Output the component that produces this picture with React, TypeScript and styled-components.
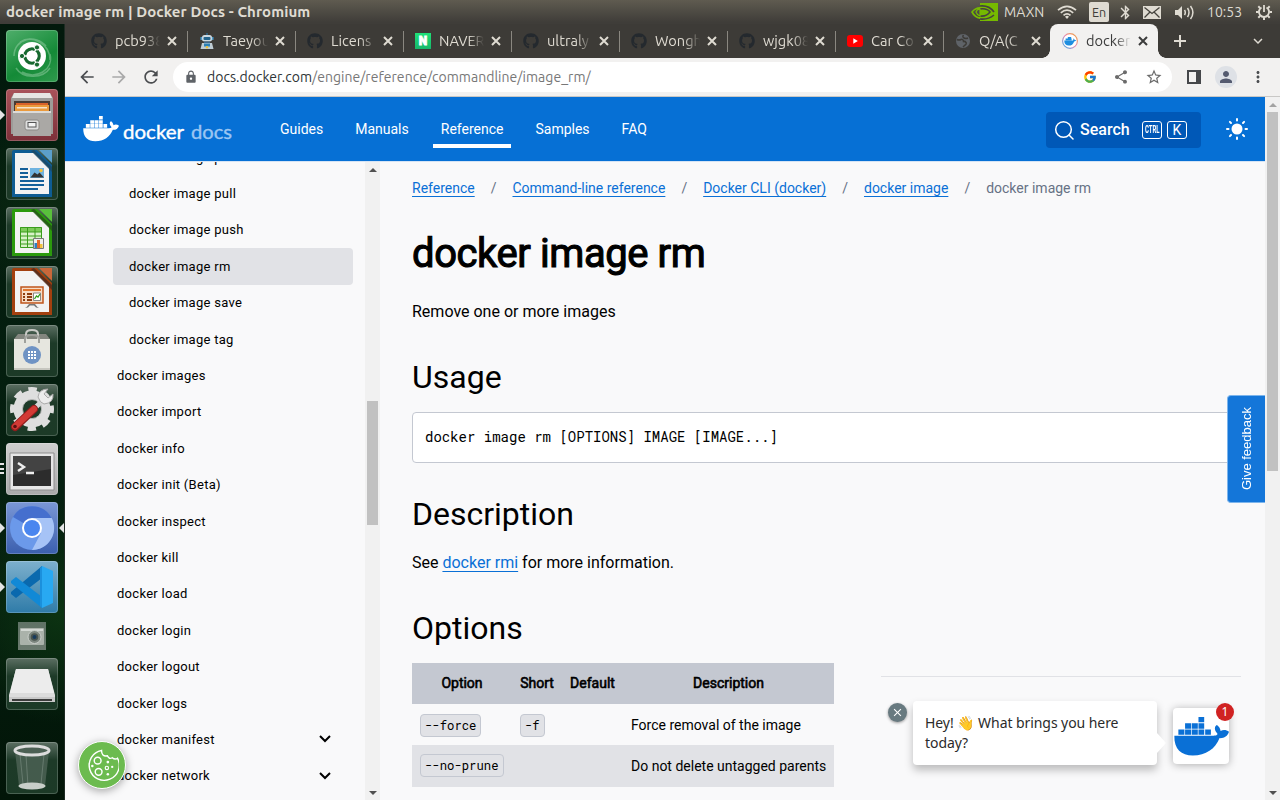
import React from "react";
import styled, { createGlobalStyle, css } from "styled-components";
import { FaGithub } from "react-icons/fa";
import { FcGoogle } from "react-icons/fc";
import {
  MdArrowBack,
  MdArrowForward,
  MdRefresh,
  MdLock,
  MdShare,
  MdStarBorder,
  MdMoreVert,
  MdPerson,
  MdClose,
  MdExpandMore,
  MdBluetooth,
} from "react-icons/md";

const ui = `Ubuntu, "Noto Sans", "Open Sans", sans-serif`;
const roboto = `Roboto, "Liberation Sans", sans-serif`;
const mono = `"Roboto Mono", "Liberation Mono", monospace`;

const Global = createGlobalStyle`
  *, *::before, *::after { box-sizing: border-box; }
  body { margin: 0; font-family: ${roboto}; color: #000; background: #f9f9fa; overflow: hidden; }
  svg { display: block; flex: none; }
`;

const Desktop = styled.div`
  width: 1280px;
  height: 800px;
  display: grid;
  grid-template: 24px 1fr / 65px minmax(0, 1fr);
  overflow: hidden;
  position: relative;
`;

/* ---------- system panel ---------- */
const Panel = styled.header`
  grid-column: 1 / -1;
  display: flex;
  align-items: center;
  justify-content: space-between;
  padding: 0 8px 0 6px;
  background: linear-gradient(#5f5b50, #3f3d39 92%);
  color: #dfdbd2;
  font-family: ${ui};
`;
const WindowTitle = styled.div`
  font-size: 15px;
  font-weight: 700;
  letter-spacing: 0.08px;
  line-height: 24px;
  white-space: nowrap;
`;
const Tray = styled.div`
  display: flex;
  align-items: center;
  font-size: 14px;
  height: 24px;
`;
const TrayItem = styled.div<{ $w: number }>`
  width: ${(p) => p.$w}px;
  flex: none;
  white-space: nowrap;
`;
const Lang = styled.div`
  width: 20px;
  height: 20px;
  margin-right: 8px;
  border-radius: 2px;
  background: #dfdbd2;
  color: #3f3d39;
  font-size: 12.5px;
  line-height: 20px;
  text-align: center;
`;

/* ---------- launcher ---------- */
const Launcher = styled.nav`
  display: flex;
  flex-direction: column;
  gap: 7px;
  padding: 6px 0 0 6px;
  background:
    radial-gradient(circle at 50px 180px, #0b2a12 0, transparent 90px),
    radial-gradient(circle at 60px 590px, #0c3312 0, transparent 110px),
    linear-gradient(#02190c, #052010 60%, #021508);
  border-right: 1px solid #1d2a22;
`;
const tileTones = {
  green: "linear-gradient(150deg, #4fae6b, #148a37 60%, #2f9a4d)",
  red: "linear-gradient(#a8525a, #7d3039)",
  glass: "linear-gradient(#5c6f63, #1d3a28 35%, #1c3a27)",
  silver: "linear-gradient(#cfcfcf, #a9a9a9)",
  blue: "linear-gradient(#7a97d6, #3b5fae)",
  sky: "linear-gradient(#7db0cd, #2f7ba8)",
};
const Tile = styled.div<{ $tone: keyof typeof tileTones; $push?: number }>`
  position: relative;
  width: 52px;
  height: 52px;
  flex: none;
  border-radius: 4px;
  margin-top: ${(p) => p.$push || 0}px;
  background: ${(p) => tileTones[p.$tone]};
  box-shadow: inset 0 0 0 1px rgba(255, 255, 255, 0.2);
`;
const Camera = styled.div`
  width: 28px;
  height: 28px;
  margin: 2px 0 1px 12px;
  background: linear-gradient(#5f7265, #6b7a6f);
`;
const Pip = styled.i<{ $side: "left" | "right" }>`
  position: absolute;
  top: 21px;
  border: 5px solid transparent;
  ${(p) =>
    p.$side === "left"
      ? css`left: -6px; border-left-color: #e4e4e4; border-right-width: 0;`
      : css`right: -6px; border-right-color: #e4e4e4; border-left-width: 0;`}
`;
const Marks = styled.i`
  position: absolute;
  left: -6px;
  top: 20px;
  width: 4px;
  height: 12px;
  background: repeating-linear-gradient(#e4e4e4 0 2px, transparent 2px 4.6px);
`;

/* ---------- browser chrome ---------- */
const Browser = styled.div`
  display: grid;
  grid-template-columns: minmax(0, 1fr);
  grid-template-rows: 34px 39px 1fr;
  min-width: 0;
  min-height: 0;
`;
const TabStrip = styled.div`
  display: flex;
  background: #3d3b37;
  padding-left: 14px;
  font-family: ${ui};
`;
const Tab = styled.div<{ $active?: boolean; $bar?: boolean }>`
  position: relative;
  width: 108px;
  height: 34px;
  flex: none;
  display: flex;
  align-items: center;
  padding-left: 12px;
  color: #dfdbd2;
  &::after {
    content: "";
    display: ${(p) => (p.$bar ? "block" : "none")};
    position: absolute;
    right: -1px;
    top: 7px;
    width: 1px;
    height: 21px;
    background: #8a8780;
  }
  ${(p) =>
    p.$active &&
    css`
      background: #f2f1f0;
      color: #3c3c3c;
      border-radius: 8px 8px 0 0;
      margin-left: -1px;
    `}
`;
const Flare = styled.i<{ $side: "left" | "right" }>`
  position: absolute;
  bottom: 0;
  width: 8px;
  height: 8px;
  ${(p) => p.$side}: -8px;
  background: radial-gradient(circle at ${(p) => (p.$side === "left" ? "0 0" : "100% 0")}, transparent 7.5px, #f2f1f0 8px);
`;
const TabLabel = styled.span`
  width: 46px;
  margin-left: 8px;
  font-size: 14.6px;
  line-height: 20px;
  white-space: nowrap;
  overflow: hidden;
  mask-image: linear-gradient(90deg, #000 64%, transparent 98%);
`;
const CloseMark = styled.svg`
  margin-left: 6px;
  width: 10px;
  height: 10px;
  fill: none;
  stroke: currentColor;
  stroke-width: 2px;
`;
const NewTab = styled.svg`
  margin: 11px 0 0 16px;
  width: 12px;
  height: 12px;
  stroke: #dfdbd2;
  stroke-width: 2px;
`;
const TabMenu = styled(MdExpandMore)`
  margin: 8px 13px 0 auto;
  width: 18px;
  height: 18px;
  color: #dfdbd2;
`;
const Naver = styled.span`
  width: 16px;
  height: 16px;
  background: linear-gradient(#1fe077, #16b76a);
  color: #fff;
  font: 900 12px/16px ${roboto};
  -webkit-text-stroke: 0.8px #fff;
  text-align: center;
`;
const Toolbar = styled.div`
  display: flex;
  align-items: center;
  background: #f2f1f0;
  border-bottom: 1px solid #c9c8c6;
  padding: 0 12px 0 12px;
  color: #4b4d50;
`;
const NavButton = styled.span<{ $off?: boolean }>`
  width: 32px;
  flex: none;
  color: ${(p) => (p.$off ? "#a9a9a9" : "#4b4d50")};
`;
const Omnibox = styled.div`
  width: 999px;
  height: 30px;
  flex: none;
  display: flex;
  align-items: center;
  border-radius: 15px;
  background: #fff;
  padding: 0 9px 0 11px;
  font-family: ${ui};
  font-size: 14px;
  color: #777;
`;
const Url = styled.div`
  flex: 1;
  margin-left: 9px;
  white-space: nowrap;
  letter-spacing: 0.03px;
  b { font-weight: 400; color: #2e3436; }
`;
const OmniIcons = styled.div`
  display: flex;
  align-items: center;
  gap: 16px;
  color: #6b6b6b;
`;
const PanelToggle = styled.svg`
  margin: 0 14px 0 15px;
`;
const Avatar = styled.div`
  width: 22px;
  height: 22px;
  border-radius: 50%;
  display: grid;
  place-items: center;
  background: #dee1e6;
  color: #555b70;
  margin-right: 12px;
`;

/* ---------- page ---------- */
const Viewport = styled.div`
  display: grid;
  grid-template-columns: minmax(0, 1fr) 15px;
  min-height: 0;
`;
const Page = styled.div`
  position: relative;
  display: grid;
  grid-template-columns: minmax(0, 1fr);
  grid-template-rows: 65px 1fr;
  background: #f9f9fa;
  min-width: 0;
  min-height: 0;
`;
const SiteHeader = styled.div`
  display: flex;
  align-items: center;
  background: #0670d5;
  border-bottom: 1px solid #d5e4f5;
  color: #fff;
  padding: 0 16px 0 18px;
`;
const TopNav = styled.div`
  display: flex;
  gap: 16px;
  margin-left: 38px;
  flex: 1;
`;
const TopLink = styled.a<{ $active?: boolean }>`
  padding: 5px 8px 0;
  font-size: 14px;
  line-height: 24px;
  height: 36px;
  margin-top: 2px;
  border-bottom: 4px solid ${(p) => (p.$active ? "#fff" : "transparent")};
`;
const SearchBox = styled.div`
  width: 155px;
  height: 36px;
  margin-top: 2px;
  border-radius: 4px;
  background: #0058b7;
  display: flex;
  align-items: center;
  padding-left: 8px;
  margin-right: 24px;
`;
const SearchText = styled.span`
  width: 62px;
  margin-left: 6px;
  margin-top: -1px;
  font-size: 16px;
  font-weight: 500;
`;
const Key = styled.span<{ $tight?: boolean }>`
  width: 20px;
  height: 18px;
  margin-right: 5px;
  border: 1px solid #fff;
  border-radius: 3px;
  display: flex;
  justify-content: center;
  font-size: ${(p) => (p.$tight ? "10px" : "14px")};
  font-weight: ${(p) => (p.$tight ? 700 : 400)};
  line-height: 16px;
  span {
    flex: none;
    transform: scaleX(${(p) => (p.$tight ? 0.6 : 1)});
  }
`;
const Body = styled.div`
  display: grid;
  grid-template-columns: 300px 15px minmax(0, 1fr);
  min-height: 0;
`;
const Sidebar = styled.aside`
  overflow: hidden;
  padding: 0 12px 0 48px;
`;
const SideList = styled.div`
  margin-top: -23px;
`;
const SideItem = styled.a<{ $nested?: boolean; $active?: boolean }>`
  display: flex;
  align-items: center;
  justify-content: space-between;
  height: 36.4px;
  padding: 0 22px 0 ${(p) => (p.$nested ? 16 : 4)}px;
  font-size: 13px;
  letter-spacing: 0.28px;
  border-radius: 4px;
  background: ${(p) => (p.$active ? "#e1e2e6" : "transparent")};
`;
const Track = styled.div<{ $top: number; $size: number }>`
  display: flex;
  flex-direction: column;
  justify-content: space-between;
  align-items: center;
  position: relative;
  background: #f1f1f1;
  padding: 6px 0 5px;
  &::after {
    content: "";
    position: absolute;
    left: 2px;
    top: ${(p) => p.$top}px;
    width: 11px;
    height: ${(p) => p.$size}px;
    background: #c1c1c1;
  }
`;
const Caret = styled.i<{ $up?: boolean; $dim?: boolean }>`
  border: 4px solid transparent;
  ${(p) => (p.$up ? "border-top-width: 0; border-bottom-color" : "border-bottom-width: 0; border-top-color")}: ${(p) =>
    p.$dim ? "#a3a3a3" : "#505050"};
`;
const Article = styled.main`
  padding: 14px 24px 0 32px;
  overflow: hidden;
`;
const Crumbs = styled.div`
  display: flex;
  gap: 16px;
  font-size: 14px;
  line-height: 24px;
  color: #677285;
  white-space: nowrap;
`;
const Link = styled.a`
  color: #0a70d6;
  text-decoration: underline;
  text-underline-offset: 3px;
  text-decoration-thickness: 1px;
`;
const H1 = styled.h1`
  margin: 30px 0 22px;
  font-size: 40px;
  line-height: 48px;
  font-weight: 400;
  letter-spacing: -0.42px;
  -webkit-text-stroke: 1.1px #000;
`;
const H2 = styled.h2<{ $top: number; $bottom: number }>`
  margin: ${(p) => p.$top}px 0 ${(p) => p.$bottom}px;
  font-size: 32px;
  line-height: 40px;
  font-weight: 400;
`;
const Para = styled.p`
  margin: 0;
  font-size: 16px;
  line-height: 24px;
`;
const CodeBlock = styled.pre`
  margin: 0;
  width: 821px;
  height: 51px;
  padding: 0 12px;
  border: 1px solid #c4c8d1;
  border-radius: 4px;
  background: #fff;
  font: 14px/47px ${mono};
`;
const OptionsRow = styled.div`
  display: flex;
  align-items: flex-start;
  justify-content: space-between;
`;
const Table = styled.table`
  width: 422px;
  border-collapse: collapse;
  table-layout: fixed;
  font-size: 14px;
`;
const Th = styled.th<{ $w: number }>`
  width: ${(p) => p.$w}px;
  height: 41px;
  padding: 0 0 2px;
  background: #c4c8d1;
  font-weight: 400;
  -webkit-text-stroke: 0.6px #000;
`;
const Tr = styled.tr<{ $shade?: boolean }>`
  height: ${(p) => (p.$shade ? 42 : 41)}px;
  background: ${(p) => (p.$shade ? "#e1e2e6" : "transparent")};
  td { padding: ${(p) => (p.$shade ? "0 0 1px 8px" : "1px 0 0 8px")}; white-space: nowrap; }
`;
const Chip = styled.code`
  display: inline-block;
  height: 23px;
  padding: 0 4px;
  border: 1px solid #c4c8d1;
  border-radius: 4px;
  background: #e1e2e6;
  font: 12.25px/21px ${mono};
`;
const Rule = styled.hr`
  width: 360px;
  margin: 13px 0 0;
  border: 0;
  border-top: 1px solid #e1e2e6;
`;

/* ---------- overlays ---------- */
const Feedback = styled.div`
  position: absolute;
  right: 0;
  top: 298px;
  width: 38px;
  height: 108px;
  border-radius: 4px 0 0 4px;
  background: #1476d9;
  border: 1px solid #7db5ec;
  border-right: 0;
  color: #fff;
  display: grid;
  place-items: center;
  span {
    writing-mode: vertical-rl;
    transform: rotate(180deg);
    font: 13px "Liberation Sans", Arial, sans-serif;
    white-space: nowrap;
  }
`;
const CookieButton = styled.div`
  position: absolute;
  left: 13px;
  top: 644px;
  width: 48px;
  height: 48px;
  border-radius: 50%;
  border: 1.5px solid #fff;
  background: #6cbb4f;
  box-shadow: 0 2px 8px rgba(0, 0, 0, 0.35);
  display: grid;
  place-items: center;
`;
const Chat = styled.div`
  position: absolute;
  right: 36px;
  bottom: 35px;
  display: flex;
  align-items: flex-start;
`;
const ChatClose = styled.div`
  width: 19px;
  height: 19px;
  margin: 2px 6px 0 0;
  border-radius: 50%;
  background: #687a80;
  color: #fff;
  display: grid;
  place-items: center;
  box-shadow: 0 1px 3px rgba(0, 0, 0, 0.4);
`;
const Bubble = styled.div`
  position: relative;
  width: 244px;
  height: 64px;
  padding: 12px;
  border-radius: 4px;
  background: #fff;
  box-shadow: 0 5px 8px rgba(0, 0, 0, 0.25);
  color: #2b2b2b;
  font: 14px/20px "Noto Sans", "Noto Color Emoji", sans-serif;
  letter-spacing: -0.07px;
  white-space: nowrap;
  &::after {
    content: "";
    position: absolute;
    left: 244px;
    top: 32px;
    border: 10px solid transparent;
    border-left: 9px solid #fff;
    border-right: 0;
  }
`;
const ChatLauncher = styled.div`
  position: relative;
  width: 56px;
  height: 56px;
  margin: 7px 0 0 16px;
  border-radius: 4px;
  background: #fff;
  color: #0a70d6;
  box-shadow: 0 1px 8px rgba(0, 0, 0, 0.3);
  padding: 9px 0 0 1px;
`;
const Badge = styled.span`
  position: absolute;
  right: -5px;
  top: -5px;
  width: 18px;
  height: 18px;
  border-radius: 50%;
  background: #d02222;
  color: #fff;
  font: 12px/18px "Noto Sans", sans-serif;
  text-align: center;
`;

const Whale = ({ w }: { w: number }) => (
  <svg width={w} height={(w * 116) / 164} viewBox="0 0 164 116" fill="currentColor">
    <path d="M73 0h17v16H73zM33 19h18v16H33zM53 19h18v16H53zM73 19h17v16H73zM13 37h18v16H13zM33 37h18v16H33zM53 37h18v16H53zM73 37h17v16H73zM93 37h17v16H93z" />
    <path d="M1 56H118C128 56 132 52 128 48C119 38 121 27 128 24C134 28 138 34 139 42C147 37 157 39 164 44C160 58 148 64 136 63C122 96 96 115 56 115C22 115 0 96 1 56Z" />
  </svg>
);

const TabClose = () => (
  <CloseMark viewBox="0 0 10 10">
    <path d="M1 1l8 8M9 1L1 9" />
  </CloseMark>
);

const DocPage = ({ edge, fill, corner, children }: { edge: string; fill: string; corner: string; children: React.ReactNode }) => (
  <svg width="52" height="52" viewBox="0 0 52 52">
    <path d="M8 2H31L46 17V49H6V4Q6 2 8 2Z" fill={edge} />
    <path d="M9 5H28L43 20V46H9Z" fill="#f3f3f3" />
    <path d="M28 2L46 19V24L25 3Z" fill={fill} opacity=".8" />
    <path d="M33 2H46V15Q45 14 33 2Z" fill={corner} />
    {children}
  </svg>
);

const Robot = () => (
  <svg width="16" height="16" viewBox="0 0 16 16">
    <path d="M7.500 0h1v3h-1z" fill="#2c80b5" />
    <rect x="3" y="2" width="10" height="6.500" rx="2.500" fill="#cdd8df" />
    <path d="M1.500 4H3v3H1.500zM13 4h1.500v3H13z" fill="#4d9ccc" />
    <rect x="4.500" y="4" width="7" height="3" rx="1" fill="#24648c" />
    <path d="M5 8.500h6v1.500H5z" fill="#40688a" />
    <path d="M3 10h10l1.500 6h-13z" fill="#bfccd4" />
    <path d="M5 10.500h6v3H5z" fill="#2c80b5" />
    <circle cx="8" cy="14.300" r="1.200" fill="#ecc13c" />
  </svg>
);

const YouTube = () => (
  <svg width="16" height="16" viewBox="0 0 16 16">
    <rect y="2" width="16" height="12" rx="3" fill="#f00" />
    <path d="M6.300 5.300v5.400L10.800 8z" fill="#fff" />
  </svg>
);

const Globe = () => (
  <svg width="16" height="16" viewBox="0 0 16 16">
    <circle cx="8" cy="8" r="7" fill="#5f6368" />
    <path d="M2 6.500Q4 7.500 6 6.500T8.500 8.500Q10 8 11 9.500T9.500 12.500L8 14M8.500 2Q7 4 9 5T13 5" fill="none" stroke="#3d3b37" strokeWidth="1.500" />
  </svg>
);

const DockerFavicon = () => (
  <svg width="16" height="16" viewBox="0 0 16 16">
    <defs>
      <linearGradient id="ring" x1="0" y1="1" x2="1" y2="0">
        <stop offset="0" stopColor="#2aa6e8" />
        <stop offset=".5" stopColor="#e88ab5" />
        <stop offset="1" stopColor="#f0a030" />
      </linearGradient>
    </defs>
    <circle cx="8" cy="8" r="7.400" fill="#fff" stroke="url(#ring)" strokeWidth="1.100" />
    <path d="M2.200 7.600H11q.6-.6.2-2 1.300.4 1.500 1.500H14.300q-.7 1.300-2.100 1.300-1.500 4.200-5.500 4.200-4.300 0-4.500-5zM3.600 5.600h6v1.600h-6zM5.800 4h3.400v1.400H5.800z" fill="#1d8ee0" />
  </svg>
);

const tabs: { icon: React.ReactNode; label: string }[] = [
  { icon: <FaGithub size={16} color="#24292e" />, label: "pcb938" },
  { icon: <Robot />, label: "Taeyou" },
  { icon: <FaGithub size={16} color="#24292e" />, label: "Licens" },
  { icon: <Naver>N</Naver>, label: "NAVER" },
  { icon: <FaGithub size={16} color="#24292e" />, label: "ultraly" },
  { icon: <FaGithub size={16} color="#24292e" />, label: "Wongh" },
  { icon: <FaGithub size={16} color="#24292e" />, label: "wjgk08" },
  { icon: <YouTube />, label: "Car Co" },
  { icon: <Globe />, label: "Q/A(C" },
];

const sideItems: { text: string; nested?: boolean; active?: boolean; open?: boolean }[] = [
  { text: "docker image prune", nested: true },
  { text: "docker image pull", nested: true },
  { text: "docker image push", nested: true },
  { text: "docker image rm", nested: true, active: true },
  { text: "docker image save", nested: true },
  { text: "docker image tag", nested: true },
  { text: "docker images" },
  { text: "docker import" },
  { text: "docker info" },
  { text: "docker init (Beta)" },
  { text: "docker inspect" },
  { text: "docker kill" },
  { text: "docker load" },
  { text: "docker login" },
  { text: "docker logout" },
  { text: "docker logs" },
  { text: "docker manifest", open: true },
  { text: "docker network", open: true },
];

const SystemPanel = () => (
  <Panel>
    <WindowTitle>docker image rm | Docker Docs - Chromium</WindowTitle>
    <Tray>
      <TrayItem $w={33}>
        <svg width="27" height="18" viewBox="0 0 27 18">
          <path d="M9 0h18v18H9z" fill="#76b900" />
          <path d="M9 4v2Q4 6 2 9q3 5 7 5v2Q3 15 0 9 4 4 9 4z" fill="#76b900" />
          <path d="M9 3q9-1 14 6M9 16q8 1 14-4M9 6q7-1 10 3-4 5-10 4" fill="none" stroke="#45433d" strokeWidth="1.600" />
          <path d="M9 6v7Q6 12 5 9q1-3 4-3zM10 8q3 0 4 2-2 2-4 1z" fill="none" stroke="#76b900" strokeWidth="1.200" />
        </svg>
      </TrayItem>
      <TrayItem $w={53}>MAXN</TrayItem>
      <TrayItem $w={32}>
        <svg width="20" height="14" viewBox="0 0 20 14" fill="none" stroke="#dfdbd2" strokeWidth="1.700">
          <path d="M1 5.200Q10-2.500 19 5.200M3.800 7.800Q10 2.500 16.200 7.800M6.500 10.300Q10 7.300 13.500 10.300" />
          <path d="M8 11.700Q10 10 12 11.700L10 14z" fill="#dfdbd2" stroke="none" />
        </svg>
      </TrayItem>
      <Lang>En</Lang>
      <TrayItem $w={26}>
        <MdBluetooth size={17} />
      </TrayItem>
      <TrayItem $w={32}>
        <svg width="18" height="13" viewBox="0 0 18 13">
          <path d="M0 0h18v13H0z" fill="#dfdbd2" />
          <path d="M1.500 1.500L9 7.500l7.500-6M1.500 11.500L7 6M16.500 11.500L11 6" fill="none" stroke="#45433d" strokeWidth="1.300" />
        </svg>
      </TrayItem>
      <TrayItem $w={32}>
        <svg width="20" height="15" viewBox="0 0 20 15" fill="none" stroke="#dfdbd2" strokeWidth="1.500">
          <path d="M0 5h3l4-4v13l-4-4H0z" fill="#dfdbd2" stroke="none" />
          <path d="M9.500 5q1.600 2.500 0 5M12.500 3q3 4.500 0 9M15.500 1q4.800 6.500 0 13" />
        </svg>
      </TrayItem>
      <TrayItem $w={49}>10:53</TrayItem>
      <svg width="16" height="16" viewBox="0 0 16 16" fill="none" stroke="#dfdbd2">
        <path d="M5.500 3.500A5.100 5.100 0 1 0 10.500 3.500" strokeWidth="1.900" />
        <path d="M8 1V8" strokeWidth="1.800" />
        <path d="M2.300 2.300l1.800 1.800M13.700 2.300l-1.800 1.800M0 8h2.500M13.500 8H16M2.300 13.700l1.800-1.800M13.700 13.700l-1.800-1.800M8 13.500V16" strokeWidth="2" />
      </svg>
    </Tray>
  </Panel>
);

const Dock = () => (
  <Launcher>
    <Tile $tone="green">
      <svg width="52" height="52" viewBox="0 0 52 52">
        <path d="M8 26C8 8 30 4 40 16M44 24C48 40 30 50 16 42M10 38C16 48 36 50 44 38M14 12C26 4 44 14 44 30" fill="none" stroke="#a3d8b1" strokeWidth="1.500" opacity=".45" />
        <circle cx="26" cy="26" r="14" fill="#fff" />
        <circle cx="26" cy="26" r="7.200" fill="none" stroke="#17692f" strokeWidth="3.200" />
        <path d="M26 26L14 26M26 26L32 15.600M26 26L32 36.400" stroke="#fff" strokeWidth="1.300" />
        <circle cx="26" cy="26" r="5.400" fill="#fff" />
        <g fill="#17692f" stroke="#fff"><circle cx="16" cy="26" r="2.600" /><circle cx="31" cy="17.400" r="2.600" /><circle cx="31" cy="34.600" r="2.600" /></g>
      </svg>
    </Tile>
    <Tile $tone="red">
      <Pip $side="left" />
      <svg width="52" height="52" viewBox="0 0 52 52">
        <path d="M8 4H44L47 9V45H5V9Z" fill="#9d9b98" />
        <path d="M8 4H44L46 9H6Z" fill="#e6e5e3" />
        <path d="M8 12H44V24H8Z" fill="#4a3a32" />
        <path d="M10 14H42V24H10Z" fill="#d9622b" />
        <path d="M9 16H43V24H9Z" fill="#eb9a3c" />
        <path d="M11 18H41V19.500H11Z" fill="#f6e3cb" />
        <path d="M7 22H45V47H7Z" fill="#aaa8a5" />
        <path d="M7 22H45V24H7Z" fill="#dcdbd9" />
        <rect x="19" y="31" width="14" height="10" rx="2" fill="#dedede" stroke="#8b8986" />
        <rect x="22" y="33.500" width="8" height="4.500" fill="#f4f4f4" stroke="#555" />
      </svg>
    </Tile>
    <Tile $tone="glass">
      <DocPage edge="#0e5c93" fill="#1d4863" corner="#5b9fcb">
        <path d="M14 21h8M14 25h8M14 29h8M14 33h24M14 37h24M14 41h18" stroke="#14609a" strokeWidth="1.800" />
        <path d="M24 20h14v10H24z" fill="#6fb3e0" />
        <path d="M24.500 29.500l4-5 3 2 2-2 4.500 5z" fill="#333" />
        <circle cx="35" cy="22.500" r="1.700" fill="#f1c23c" />
      </DocPage>
    </Tile>
    <Tile $tone="glass">
      <DocPage edge="#2b9a0d" fill="#245417" corner="#59c03c">
        <path d="M14 20h22v21H14z" fill="#d8f2c8" />
        <path d="M14 20h22v5H14z" fill="#7ecb5a" />
        <path d="M14.500 20.500h21v20h-21zM14 25h22M14 29h22M14 33h22M14 37h22M21.500 20v21M29 20v21" fill="none" stroke="#3a9d1c" />
        <path d="M27.500 31.500h10v10h-10z" fill="#eee" stroke="#777" />
        <path d="M28.500 36h2.500v5h-2.500z" fill="#2d7fc2" />
        <path d="M31 33h3v8h-3z" fill="#e4692a" />
        <path d="M34 37h2.500v4H34z" fill="#f1c23c" />
      </DocPage>
    </Tile>
    <Tile $tone="glass">
      <DocPage edge="#a3400f" fill="#4d2b1b" corner="#c9683a">
        <path d="M15 21h22v16H15z" fill="#f7ddc8" stroke="#c0561c" strokeWidth="1.500" />
        <path d="M17 24h18" stroke="#e0762f" strokeWidth="2" />
        <path d="M17 28h2M21 28h5M17 31h2M21 31h5M17 34h2M21 34h5" stroke="#8e3d10" strokeWidth="2" />
        <path d="M27.500 27h7v7.500h-7z" fill="#fff" stroke="#888" />
        <path d="M28.500 33l2-3 1.500 1 2-3" stroke="#35a01e" fill="none" strokeWidth="1.300" />
        <path d="M19 42q2-1 4-4h6q2 3 4 4l-3-.5-2-2h-4l-2 2z" fill="#777" />
      </DocPage>
    </Tile>
    <Tile $tone="glass">
      <svg width="52" height="52" viewBox="0 0 52 52">
        <path d="M12 9H40L44 14H8Z" fill="#83867f" />
        <path d="M8 14H44V45H8Z" fill="#e6e6df" />
        <path d="M8 43H44V45H8Z" fill="#c6c6bf" />
        <path d="M20 14V9Q20 5 26 5T32 9V14" fill="none" stroke="#c9cac6" strokeWidth="2" />
        <path d="M19 18V14Q19 10 26 10T33 14V18" fill="none" stroke="#9fa19c" strokeWidth="2" />
        <circle cx="26" cy="30" r="9" fill="#6f93c4" />
        <path d="M22 26h2v2h-2zM25 26h2v2h-2zM28 26h2v2h-2zM22 29h2v2h-2zM25 29h2v2h-2zM28 29h2v2h-2zM22 32h2v2h-2zM25 32h2v2h-2zM28 32h2v2h-2z" fill="#fff" />
      </svg>
    </Tile>
    <Tile $tone="glass">
      <svg width="52" height="52" viewBox="0 0 52 52">
        <circle cx="26" cy="25" r="14" fill="none" stroke="#dedede" strokeWidth="9" />
        <circle cx="26" cy="25" r="19" fill="none" stroke="#dedede" strokeWidth="6" strokeDasharray="8.200 6.720" strokeDashoffset="4.100" />
        <circle cx="26" cy="25" r="9.500" fill="none" stroke="#b9b9b9" />
        <path d="M24 29L37 16" stroke="#d7d7d7" strokeWidth="5" />
        <path d="M32 13Q33 5 42 5L38 10L42 14L47 10Q48 19 38 20Q34 19 32 13Z" fill="#ececec" stroke="#a9a9a9" />
        <path d="M9 43L28 25" stroke="#8f1d1d" strokeWidth="8" strokeLinecap="round" />
        <path d="M9 42.500L28 25" stroke="#d33a35" strokeWidth="6" strokeLinecap="round" />
        <circle cx="9" cy="42.500" r="1.800" fill="#5c1111" />
      </svg>
    </Tile>
    <Tile $tone="silver">
      <Marks />
      <svg width="52" height="52" viewBox="0 0 52 52">
        <path d="M4 10H48V47H4Z" fill="#e6e6e6" stroke="#8e8e8e" />
        <path d="M7 13H45V43H7Z" fill="#2c2c2c" />
        <path d="M7 13H45V26L7 32Z" fill="#434343" />
        <path d="M12 20l6 4-6 4M20 30h8" fill="none" stroke="#eee" strokeWidth="2.400" />
      </svg>
    </Tile>
    <Tile $tone="blue">
      <Pip $side="left" />
      <Pip $side="right" />
      <svg width="52" height="52" viewBox="0 0 52 52">
        <circle cx="26" cy="26" r="22" fill="#6b99ea" />
        <path d="M26 26L7 15A22 22 0 0 1 45.500 16Z" fill="#456fce" />
        <path d="M26 16H45.700A22 22 0 0 1 26 48L35 31Z" fill="#a6c3f6" />
        <circle cx="26" cy="26" r="10" fill="#fff" />
        <circle cx="26" cy="26" r="8" fill="#4a86ef" />
      </svg>
    </Tile>
    <Tile $tone="sky">
      <Pip $side="left" />
      <svg width="52" height="52" viewBox="0 0 52 52">
        <path d="M36 5V17L10 37L5 33V31Z" fill="#0a69ae" />
        <path d="M5 20L10 16L36 36V47L5 22Z" fill="#1189d6" />
        <path d="M36 5L47 10V42L36 47Z" fill="#28a9f2" />
        <path d="M36 5V47L34 45V7Z" fill="#1b90dc" />
      </svg>
    </Tile>
    <Camera>
      <svg width="28" height="28" viewBox="0 0 28 28">
        <rect x="2" y="6" width="24" height="17" rx="1" fill="#aab2aa" />
        <path d="M3 7h22v2H3z" fill="#d3d8d3" />
        <circle cx="16.500" cy="15" r="6.500" fill="#7d877f" stroke="#c9cec9" />
        <circle cx="16.500" cy="15" r="3.800" fill="#4a5550" />
        <circle cx="16.500" cy="15" r="2" fill="#173a5c" />
      </svg>
    </Camera>
    <Tile $tone="glass">
      <svg width="52" height="52" viewBox="0 0 52 52">
        <path d="M10 11H42L49 37V44H3V37Z" fill="#dcdcdc" />
        <path d="M10 11H42L48 35H4Z" fill="#ececec" />
        <path d="M3 39H49V44H3Z" fill="#c9c9c9" />
        <path d="M6 41H46V43H6Z" fill="#3c3c3c" />
      </svg>
    </Tile>
    <Tile $tone="glass" $push={25}>
      <svg width="52" height="52" viewBox="0 0 52 52">
        <path d="M9 9L13 44Q26 49 39 44L43 9Z" fill="#52675a" opacity=".75" />
        <path d="M14 12L17 42M20 13L22 44M38 12L35 42" stroke="#7d8f84" opacity=".6" />
        <ellipse cx="26" cy="44" rx="13.500" ry="3.500" fill="#c8cec9" />
        <ellipse cx="26" cy="8.500" rx="17" ry="4.500" fill="#4c6054" stroke="#dcdcdc" strokeWidth="3" />
      </svg>
    </Tile>
  </Launcher>
);

const Cookie = () => (
  <svg width="33" height="33" viewBox="0 0 34 34" fill="none" stroke="#fff" strokeWidth="1.500">
    <path d="M16 1.500A15.500 15.500 0 1 0 32.500 9.500Q30 11.500 27 9Q24 11 22 7Q16 8 16 1.500Z" />
    <circle cx="12" cy="12" r="3.500" />
    <circle cx="13" cy="23.500" r="3.500" />
    <circle cx="21.500" cy="19.500" r="1.700" strokeWidth="1.200" />
    <g fill="#fff" stroke="none">
      <circle cx="6.500" cy="17.500" r="1.300" />
      <circle cx="22.500" cy="13.500" r="1.400" />
      <circle cx="27" cy="18.500" r="1.200" />
      <circle cx="22.500" cy="26" r="1.300" />
    </g>
  </svg>
);

export default function App() {
  return (
    <>
      <Global />
      <Desktop>
        <SystemPanel />
        <Dock />
        <Browser>
          <TabStrip>
            {tabs.map((t, i) => (
              <Tab key={t.label} $bar={i < tabs.length - 1}>
                {t.icon}
                <TabLabel>{t.label}</TabLabel>
                <TabClose />
              </Tab>
            ))}
            <Tab $active>
              <Flare $side="left" />
              <Flare $side="right" />
              <DockerFavicon />
              <TabLabel>docker</TabLabel>
              <TabClose />
            </Tab>
            <NewTab viewBox="0 0 12 12">
              <path d="M6 0v12M0 6h12" />
            </NewTab>
            <TabMenu />
          </TabStrip>
          <Toolbar>
            <NavButton><MdArrowBack size={20} /></NavButton>
            <NavButton $off><MdArrowForward size={20} /></NavButton>
            <NavButton><MdRefresh size={20} /></NavButton>
            <Omnibox>
              <MdLock size={14} color="#5f6368" />
              <Url>
                <b>docs.docker.com</b>/engine/reference/commandline/image_rm/
              </Url>
              <OmniIcons>
                <FcGoogle size={14} />
                <MdShare size={16} />
                <MdStarBorder size={18} />
              </OmniIcons>
            </Omnibox>
            <PanelToggle width="14" height="14" viewBox="0 0 14 14">
              <path d="M1 1h12v12H1z" fill="none" stroke="#45474a" strokeWidth="2" />
              <path d="M9 1h4v12H9z" fill="#45474a" />
            </PanelToggle>
            <Avatar>
              <MdPerson size={18} />
            </Avatar>
            <MdMoreVert size={18} />
          </Toolbar>
          <Viewport>
            <Page>
              <SiteHeader>
                <Whale w={36} />
                <svg width="115" height="30" viewBox="0 0 115 30" fill="#fff" fontFamily="Lato, sans-serif" fontSize="20">
                  <text x="4" y="24.500" textLength="61" lengthAdjust="spacingAndGlyphs" stroke="#fff" strokeWidth=".4">docker</text>
                  <text x="72" y="24.500" textLength="41" lengthAdjust="spacingAndGlyphs" fill="#9cc6f2" stroke="#9cc6f2" strokeWidth=".4">docs</text>
                </svg>
                <TopNav>
                  <TopLink>Guides</TopLink>
                  <TopLink>Manuals</TopLink>
                  <TopLink $active>Reference</TopLink>
                  <TopLink>Samples</TopLink>
                  <TopLink>FAQ</TopLink>
                </TopNav>
                <SearchBox>
                  <svg width="20" height="20" viewBox="0 0 20 20" fill="none" stroke="#fff" strokeWidth="1.500" strokeLinecap="round">
                    <circle cx="9.500" cy="9.500" r="7.800" />
                    <path d="M15 15l4 4" />
                  </svg>
                  <SearchText>Search</SearchText>
                  <Key $tight><span>CTRL</span></Key>
                  <Key><span>K</span></Key>
                </SearchBox>
                <svg width="24" height="24" viewBox="0 0 24 24" stroke="#fff" strokeWidth="2" strokeLinecap="round">
                  <circle cx="12" cy="12" r="4.500" fill="#fff" />
                  <path d="M12 2v1.500M12 20.500V22M2 12h1.500M20.500 12H22M4.900 4.900l1.100 1.100M18 18l1.100 1.100M4.900 19.100L6 18M18 6l1.100-1.100" />
                </svg>
              </SiteHeader>
              <Body>
                <Sidebar>
                  <SideList>
                    {sideItems.map((s) => (
                      <SideItem key={s.text} $nested={s.nested} $active={s.active}>
                        {s.text}
                        {s.open && (
                          <svg width="12" height="8" viewBox="0 0 12 8" fill="none" stroke="#000" strokeWidth="2">
                            <path d="M1 1l5 5 5-5" />
                          </svg>
                        )}
                      </SideItem>
                    ))}
                  </SideList>
                </Sidebar>
                <Track $top={239} $size={124}>
                  <Caret $up />
                  <Caret />
                </Track>
                <Article>
                  <Crumbs>
                    <Link>Reference</Link>
                    <span>/</span>
                    <Link>Command-line reference</Link>
                    <span>/</span>
                    <Link>Docker CLI (docker)</Link>
                    <span>/</span>
                    <Link>docker image</Link>
                    <span>/</span>
                    <span>docker image rm</span>
                  </Crumbs>
                  <H1>docker image rm</H1>
                  <Para>Remove one or more images</Para>
                  <H2 $top={33} $bottom={15}>Usage</H2>
                  <CodeBlock>docker image rm [OPTIONS] IMAGE [IMAGE...]</CodeBlock>
                  <H2 $top={31} $bottom={17}>Description</H2>
                  <Para>
                    See <Link>docker rmi</Link> for more information.
                  </Para>
                  <H2 $top={33} $bottom={15}>Options</H2>
                  <OptionsRow>
                    <Table>
                      <thead>
                        <tr>
                          <Th $w={100}>Option</Th>
                          <Th $w={50}>Short</Th>
                          <Th $w={61}>Default</Th>
                          <Th $w={211}>Description</Th>
                        </tr>
                      </thead>
                      <tbody>
                        <Tr>
                          <td><Chip>--force</Chip></td>
                          <td><Chip>-f</Chip></td>
                          <td />
                          <td>Force removal of the image</td>
                        </Tr>
                        <Tr $shade>
                          <td><Chip>--no-prune</Chip></td>
                          <td />
                          <td />
                          <td>Do not delete untagged parents</td>
                        </Tr>
                      </tbody>
                    </Table>
                    <Rule />
                  </OptionsRow>
                </Article>
              </Body>
              <Feedback>
                <span>Give feedback</span>
              </Feedback>
              <CookieButton>
                <Cookie />
              </CookieButton>
              <Chat>
                <ChatClose>
                  <MdClose size={13} />
                </ChatClose>
                <Bubble>
                  Hey! 👋 What brings you here
                  <br />
                  today?
                </Bubble>
                <ChatLauncher>
                  <Whale w={55} />
                  <Badge>1</Badge>
                </ChatLauncher>
              </Chat>
            </Page>
            <Track $top={15} $size={359}>
              <Caret $up $dim />
              <Caret />
            </Track>
          </Viewport>
        </Browser>
      </Desktop>
    </>
  );
}
